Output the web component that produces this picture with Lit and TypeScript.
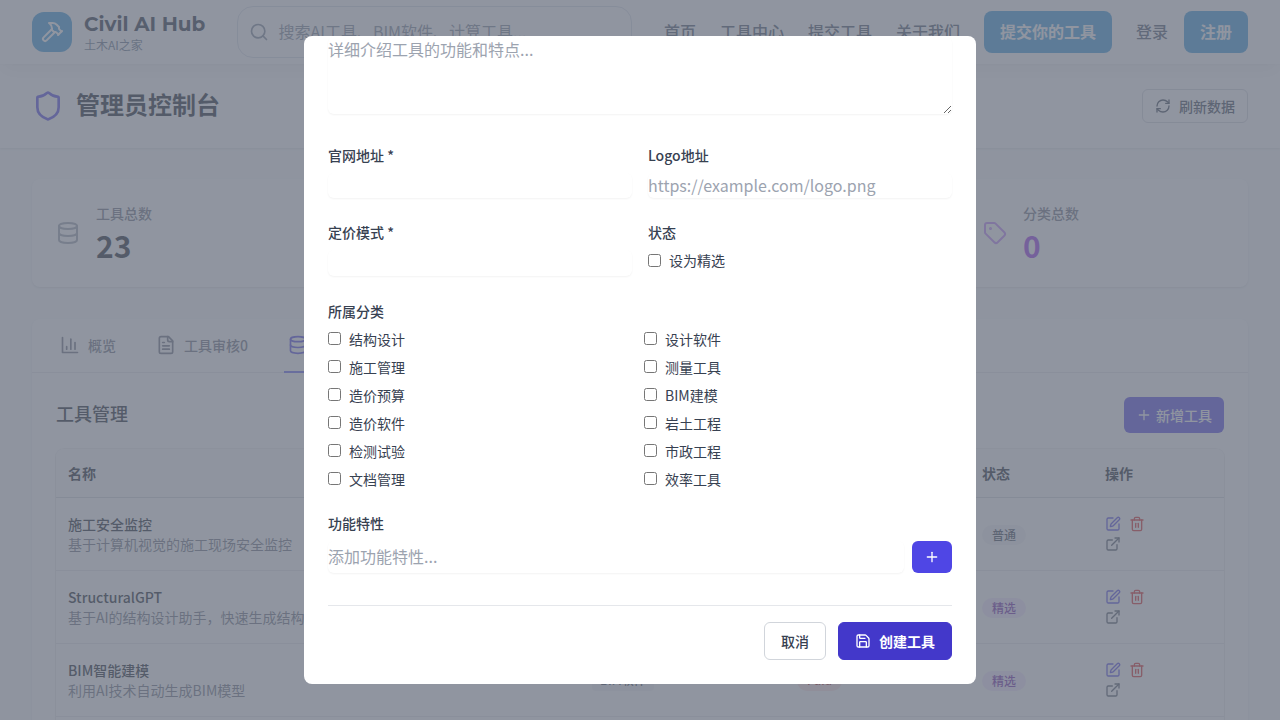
import { LitElement, html, css, svg } from "lit";
import { customElement } from "lit/decorators.js";

const ICONS = {
  hammer: svg`<path d="m15 12-8.373 8.373a1 1 0 1 1-3-3L12 9"/><path d="m18 15 4-4"/><path d="m21.5 11.5-1.914-1.914A2 2 0 0 1 19 8.172V7l-2.26-2.26a6 6 0 0 0-4.202-1.756L9 2.96l.92.82A6.18 6.18 0 0 1 12 8.4V10l2 2h1.172a2 2 0 0 1 1.414.586L18.5 14.5"/>`,
  search: svg`<circle cx="11" cy="11" r="8"/><path d="m21 21-4.3-4.3"/>`,
  shield: svg`<path d="M20 13c0 5-3.5 7.5-7.66 8.95a1 1 0 0 1-.67-.01C7.5 20.5 4 18 4 13V6a1 1 0 0 1 1-1c2 0 4.5-1.2 6.24-2.72a1.17 1.17 0 0 1 1.52 0C14.51 3.81 17 5 19 5a1 1 0 0 1 1 1z"/>`,
  refresh: svg`<path d="M3 12a9 9 0 0 1 9-9 9.75 9.75 0 0 1 6.74 2.74L21 8"/><path d="M21 3v5h-5"/><path d="M21 12a9 9 0 0 1-9 9 9.75 9.75 0 0 1-6.74-2.74L3 16"/><path d="M8 16H3v5"/>`,
  database: svg`<ellipse cx="12" cy="5" rx="9" ry="3"/><path d="M3 5V19A9 3 0 0 0 21 19V5"/><path d="M3 12A9 3 0 0 0 21 12"/>`,
  tag: svg`<path d="M12.586 2.586A2 2 0 0 0 11.172 2H4a2 2 0 0 0-2 2v7.172a2 2 0 0 0 .586 1.414l8.704 8.704a2.426 2.426 0 0 0 3.42 0l6.58-6.58a2.426 2.426 0 0 0 0-3.42z"/><circle cx="7.5" cy="7.5" r=".5" fill="currentColor"/>`,
  chart: svg`<path d="M3 3v18h18"/><path d="M18 17V9"/><path d="M13 17V5"/><path d="M8 17v-3"/>`,
  file: svg`<path d="M15 2H6a2 2 0 0 0-2 2v16a2 2 0 0 0 2 2h12a2 2 0 0 0 2-2V7Z"/><path d="M14 2v4a2 2 0 0 0 2 2h4"/><path d="M10 9H8"/><path d="M16 13H8"/><path d="M16 17H8"/>`,
  plus: svg`<path d="M5 12h14"/><path d="M12 5v14"/>`,
  edit: svg`<path d="M12 3H5a2 2 0 0 0-2 2v14a2 2 0 0 0 2 2h14a2 2 0 0 0 2-2v-7"/><path d="M18.375 2.625a1 1 0 0 1 3 3l-9.013 9.014a2 2 0 0 1-.853.505l-2.873.84a.5.5 0 0 1-.62-.62l.84-2.873a2 2 0 0 1 .506-.852z"/>`,
  trash: svg`<path d="M3 6h18"/><path d="M19 6v14c0 1-1 2-2 2H7c-1 0-2-1-2-2V6"/><path d="M8 6V4c0-1 1-2 2-2h4c1 0 2 1 2 2v2"/><path d="M10 11v6"/><path d="M14 11v6"/>`,
  external: svg`<path d="M15 3h6v6"/><path d="M10 14 21 3"/><path d="M18 13v6a2 2 0 0 1-2 2H5a2 2 0 0 1-2-2V8a2 2 0 0 1 2-2h6"/>`,
  save: svg`<path d="M15.2 3a2 2 0 0 1 1.4.6l3.8 3.8a2 2 0 0 1 .6 1.4V19a2 2 0 0 1-2 2H5a2 2 0 0 1-2-2V5a2 2 0 0 1 2-2z"/><path d="M17 21v-7a1 1 0 0 0-1-1H8a1 1 0 0 0-1 1v7"/><path d="M7 3v4a1 1 0 0 0 1 1h7"/>`,
};

const icon = (name: keyof typeof ICONS, size: number) => html`<svg
  width=${size} height=${size} viewBox="0 0 24 24" fill="none" stroke="currentColor"
  stroke-width="2" stroke-linecap="round" stroke-linejoin="round">${ICONS[name]}</svg>`;

const TOOLS = [
  { name: "施工安全监控", desc: "基于计算机视觉的施工现场安全监控", featured: false },
  { name: "StructuralGPT", desc: "基于AI的结构设计助手，快速生成结构", featured: true },
  { name: "BIM智能建模", desc: "利用AI技术自动生成BIM模型", featured: true, category: "BIM软件", price: "Paid" },
];

const CATEGORIES = [
  "结构设计", "设计软件", "施工管理", "测量工具", "造价预算", "BIM建模",
  "造价软件", "岩土工程", "检测试验", "市政工程", "文档管理", "效率工具",
];

const base = css`
  * { box-sizing: border-box; }
  svg { display: block; flex: none; }
  button, input, textarea, select { font: inherit; color: inherit; margin: 0; }
`;

@customElement("tool-dialog")
class ToolDialog extends LitElement {
  static styles = [base, css`
    :host {
      display: flex; flex-direction: column; justify-content: flex-end;
      width: 672px; height: 648px; padding: 0 24px 24px; overflow: hidden;
      background: #fff; border-radius: 8px; color: #374151;
      font-size: 14px; line-height: 20px;
    }
    .pair { display: grid; grid-template-columns: 1fr 1fr; column-gap: 16px; }
    .first { padding-top: 30.8px; }
    .second { padding-top: 24px; }
    .label { font-weight: 500; padding-bottom: 8px; }
    .control {
      display: block; width: 100%; border: 0; padding: 0 0 2px; outline: none; background: #fff;
      border-radius: 6px; box-shadow: 0 1px 2px rgba(0, 0, 0, 0.05);
      font-size: 16px; line-height: 23.6px; height: 25.6px; appearance: none;
    }
    .control::placeholder { color: #9ca3af; opacity: 1; }
    .area { height: 76.8px; flex: none; resize: vertical; padding: 0; line-height: 25.6px; }
    .check { display: flex; align-items: center; gap: 8px; height: 20px; }
    .check input { width: 13px; height: 13px; flex: none; margin-bottom: 1px; }
    .status .check input { margin: 1px 0 0; }
    .cats { padding-top: 25px; }
    .grid { display: grid; grid-template-columns: 1fr 1fr; gap: 8px; }
    .features { padding-top: 24px; }
    .row { display: flex; gap: 8px; height: 32px; }
    .row .control { flex: 1; height: 32px; }
    .add {
      width: 40px; border: 0; border-radius: 6px; background: #4f46e5; color: #fff;
      display: flex; align-items: center; justify-content: center; padding: 0;
    }
    .actions {
      margin-top: 32px; border-top: 1px solid #e5e7eb; padding-top: 16px;
      display: flex; justify-content: flex-end; gap: 12px;
    }
    .btn {
      height: 38px; border: 1px solid #d1d5db; border-radius: 6px; background: #fff;
      padding: 0 16px; font-weight: 500; display: flex; align-items: center; gap: 8px;
    }
    .primary { background: #4338ca; border-color: #4338ca; color: #fff; font-weight: 600; }
  `];
  check(text: string) {
    return html`<label class="check"><input type="checkbox" /><span>${text}</span></label>`;
  }
  label(text: string) {
    return html`<div class="label">${text}</div>`;
  }
  render() {
    return html`
      <textarea class="control area" placeholder="详细介绍工具的功能和特点..."></textarea>
      <div class="pair first">
        <div>${this.label("官网地址 *")}<input class="control" /></div>
        <div>${this.label("Logo地址")}<input class="control" placeholder="https://example.com/logo.png" /></div>
      </div>
      <div class="pair second">
        <div>${this.label("定价模式 *")}<select class="control"></select></div>
        <div class="status">${this.label("状态")}${this.check("设为精选")}</div>
      </div>
      <div class="cats">
        ${this.label("所属分类")}
        <div class="grid">${CATEGORIES.map((c) => this.check(c))}</div>
      </div>
      <div class="features">
        ${this.label("功能特性")}
        <div class="row">
          <input class="control" placeholder="添加功能特性..." />
          <button class="add">${icon("plus", 16)}</button>
        </div>
      </div>
      <div class="actions">
        <button class="btn">取消</button>
        <button class="btn primary">${icon("save", 16)}<span>创建工具</span></button>
      </div>`;
  }
}

@customElement("app-root")
class AppRoot extends LitElement {
  static styles = [base, css`
    :host {
      display: block; position: relative; width: 1280px; height: 720px; overflow: hidden;
      background: #f9fafb; color: #111827;
      font-family: "Noto Sans CJK SC", sans-serif; font-size: 14px; line-height: 20px;
    }
    .t { display: block; margin: -1px 0 1px; }
    .top {
      position: relative; height: 64px; padding: 0 32px; background: #fff;
      display: flex; align-items: center; font-size: 16px; line-height: 24px;
      box-shadow: 0 10px 15px -3px rgba(0, 0, 0, 0.06), 0 0 2px rgba(0, 0, 0, 0.06);
    }
    .logo {
      width: 40px; height: 40px; border-radius: 12px; background: #3498db; color: #fff;
      display: flex; align-items: center; justify-content: center;
    }
    .brand { margin-left: 12px; width: 153px; color: #1e293b; }
    .name { font: 700 20px/24px Montserrat, Inter, sans-serif; white-space: nowrap; }
    .sub { font-size: 12px; line-height: 16px; color: #64748b; margin-top: 1px; }
    .search {
      width: 395px; height: 52px; border: 1px solid #d8dee8; border-radius: 16px;
      display: flex; align-items: center; gap: 9.5px; padding-left: 11px; color: #7b8798;
    }
    .nav { display: flex; gap: 24px; margin-left: 32px; font-weight: 500; color: #475569; }
    .cta {
      height: 42px; padding: 0 16px; border-radius: 8px; background: #3498db; color: #fff;
      display: flex; align-items: center; font-weight: 700;
    }
    .submit { margin: 0 24px; }
    .login { margin-right: 16px; font-weight: 500; color: #475569; }
    .title {
      height: 84px; padding: 0 32px; background: #fff; display: flex; align-items: center;
      box-shadow: 0 1px 2px rgba(0, 0, 0, 0.1);
    }
    .title .shield { color: #4f46e5; }
    .title h1 { margin: -2px auto 2px 12px; font-size: 24px; line-height: 32px; font-weight: 700; }
    .refresh {
      height: 34px; border: 1px solid #d1d5db; border-radius: 6px; background: #fff;
      color: #374151; padding: 0 12px; display: flex; align-items: center; gap: 8px; font-weight: 500;
    }
    .stats { margin: 31px 32px 0; display: grid; grid-template-columns: repeat(4, 1fr); gap: 20px; height: 108px; }
    .card { background: #fff; border-radius: 8px; box-shadow: 0 1px 2px rgba(0, 0, 0, 0.1); }
    .stat { display: flex; align-items: center; padding: 0 24px; gap: 16px; color: #9ca3af; }
    .cap { color: #6b7280; font-weight: 500; padding-top: 1px; }
    .num { font-size: 30px; line-height: 40px; font-weight: 700; color: #111827; padding-top: 2px; }
    .purple { color: #c084fc; }
    .purple .num { color: #9333ea; }
    .panel { margin: 32px 32px 0; height: 500px; }
    .tabs { height: 54px; padding: 0 24px; display: flex; gap: 32px; border-bottom: 1px solid #e5e7eb; }
    .tab {
      display: flex; align-items: center; gap: 8px; padding: 0 4px; height: 54px;
      border-bottom: 2px solid transparent; color: #6b7280; font-weight: 500;
    }
    .active { border-color: #6366f1; color: #4f46e5; width: 116px; }
    .body { padding: 24px; }
    .head { display: flex; justify-content: space-between; align-items: center; height: 36px; }
    .head h2 { margin: -2px 0 2px; font-size: 18px; line-height: 28px; font-weight: 500; }
    .new {
      height: 36px; border: 0; border-radius: 6px; background: #4f46e5; color: #fff;
      display: flex; align-items: center; gap: 4px; padding: 0 12px; font-weight: 500;
    }
    .table {
      margin-top: 16px; border-radius: 8px; overflow: hidden; min-height: 340px;
      box-shadow: 0 0 0 1px rgba(0, 0, 0, 0.05), 0 1px 3px rgba(0, 0, 0, 0.08);
    }
    .tr {
      display: grid; grid-template-columns: 524px 205px 185px 123px 131px; align-items: center;
      height: 73px; border-bottom: 1px solid #e5e7eb;
    }
    .tr > div { padding: 0 12px; }
    .th { height: 49px; background: #f9fafb; border-color: #d1d5db; font-weight: 600; }
    .tool { font-weight: 500; }
    .desc { color: #6b7280; }
    .badge {
      display: inline-block; font-size: 12px; line-height: 16px; padding: 2px 10px;
      border-radius: 10px; background: #f3f4f6; color: #374151; font-weight: 500; vertical-align: middle;
    }
    .feat { background: #f3e8ff; color: #6b21a8; }
    .cat { border-radius: 4px; padding: 1px 8px 3px; }
    .paid { background: #fee2e2; color: #991b1b; padding: 1px 10px 3px; }
    .ops { display: grid; grid-template-columns: 16px 16px; gap: 4px 8px; }
    .pen { color: #4f46e5; }
    .bin { color: #dc2626; }
    .link { color: #4b5563; }
    .overlay {
      position: absolute; inset: 0; background: rgba(107, 114, 128, 0.75);
      display: flex; align-items: center; justify-content: center;
    }
  `];
  render() {
    return html`
      <header class="top">
        <div class="logo">${icon("hammer", 24)}</div>
        <div class="brand"><div class="name">Civil AI Hub</div><div class="sub">土木AI之家</div></div>
        <div class="search">${icon("search", 20)}<span class="t">搜索AI工具、BIM软件、计算工具...</span></div>
        <nav class="nav"><span class="t">首页</span><span class="t">工具中心</span><span class="t">提交工具</span><span class="t">关于我们</span></nav>
        <div class="cta submit"><span class="t">提交你的工具</span></div>
        <div class="login"><span class="t">登录</span></div>
        <div class="cta"><span class="t">注册</span></div>
      </header>
      <section class="title">
        <div class="shield">${icon("shield", 32)}</div>
        <h1>管理员控制台</h1>
        <button class="refresh">${icon("refresh", 16)}<span>刷新数据</span></button>
      </section>
      <section class="stats">
        <div class="card stat">${icon("database", 24)}<div><div class="cap">工具总数</div><div class="num">23</div></div></div>
        <div class="card"></div>
        <div class="card"></div>
        <div class="card stat purple">${icon("tag", 24)}<div><div class="cap">分类总数</div><div class="num">0</div></div></div>
      </section>
      <section class="card panel">
        <div class="tabs">
          <div class="tab">${icon("chart", 20)}<span>概览</span></div>
          <div class="tab">${icon("file", 20)}<span>工具审核0</span></div>
          <div class="tab active">${icon("database", 20)}</div>
        </div>
        <div class="body">
          <div class="head"><h2>工具管理</h2><button class="new">${icon("plus", 16)}<span>新增工具</span></button></div>
          <div class="table">
            <div class="tr th"><div>名称</div><div></div><div></div><div>状态</div><div>操作</div></div>
            ${TOOLS.map((t) => html`<div class="tr">
              <div><div class="tool">${t.name}</div><div class="desc">${t.desc}</div></div>
              <div>${t.category ? html`<span class="badge cat">${t.category}</span>` : ""}</div>
              <div>${t.price ? html`<span class="badge paid">${t.price}</span>` : ""}</div>
              <div><span class="badge ${t.featured ? "feat" : ""}">${t.featured ? "精选" : "普通"}</span></div>
              <div class="ops"><span class="pen">${icon("edit", 16)}</span><span class="bin">${icon("trash", 16)}</span><span class="link">${icon("external", 16)}</span></div>
            </div>`)}
          </div>
        </div>
      </section>
      <div class="overlay"><tool-dialog></tool-dialog></div>`;
  }
}
